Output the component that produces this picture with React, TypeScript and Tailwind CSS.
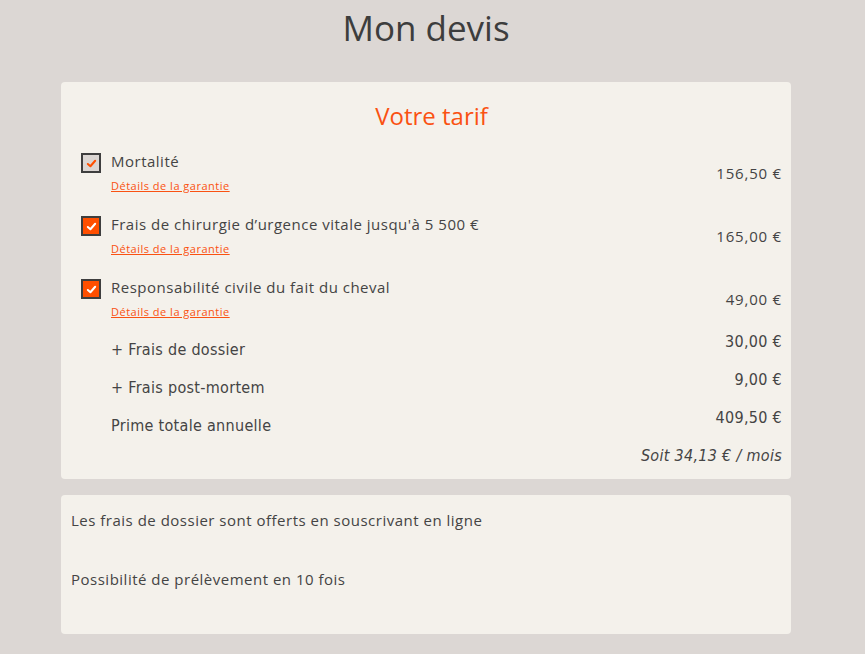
import React from "react"

interface Garantie {
  label: string
  price: string
  checked: boolean
  highlight: boolean
}

const garanties: Garantie[] = [
  { label: "Mortalité", price: "156,50 €", checked: true, highlight: false },
  {
    label: "Frais de chirurgie d’urgence vitale jusqu'à 5 500 €",
    price: "165,00 €",
    checked: true,
    highlight: true,
  },
  {
    label: "Responsabilité civile du fait du cheval",
    price: "49,00 €",
    checked: true,
    highlight: true,
  },
]

const frais = [
  { label: "+ Frais de dossier", price: "30,00 €" },
  { label: "+ Frais post-mortem", price: "9,00 €" },
  { label: "Prime totale annuelle", price: "409,50 €" },
]

function Checkbox({ highlight }: { highlight: boolean }) {
  return (
    <div
      className={
        highlight
          ? "mt-[2px] flex h-5 w-5 shrink-0 items-center justify-center border-2 border-[#3e3e3e] bg-[#ff4f00]"
          : "mt-[2px] flex h-5 w-5 shrink-0 items-center justify-center border-2 border-[#3e3e3e] bg-[#dbd6d3]"
      }
    >
      <svg viewBox="0 0 12 12" className="h-[11px] w-[11px]">
        <polyline
          points="2,6.5 4.8,9 10,3"
          fill="none"
          stroke={highlight ? "#ffffff" : "#ff4f00"}
          strokeWidth="2.2"
          strokeLinecap="round"
          strokeLinejoin="round"
        />
      </svg>
    </div>
  )
}

export default function App() {
  return (
    <div className="min-h-[654px] w-full bg-[#dcd7d4] font-['Open_Sans',sans-serif] text-[#444444]">
      <div className="flex w-[852px] flex-col items-center pb-5">
        <h1 className="mt-[5px] text-[35px] leading-[46px] text-[#3d3d3d]">Mon devis</h1>

        <div className="mt-[31px] w-[730px] rounded bg-[#f4f1eb] pt-[18px] pr-[9px] pb-[13px] pl-5">
          <h2 className="text-center text-[24px] leading-8 text-[#fa5212]">Votre tarif</h2>

          <div className="mt-[19px] flex flex-col gap-5">
            {garanties.map((g) => (
              <div key={g.label} className="flex items-center justify-between">
                <div className="flex gap-[10px]">
                  <Checkbox highlight={g.highlight} />
                  <div className="flex flex-col">
                    <span className="text-[15px] leading-5 tracking-[0.5px]">{g.label}</span>
                    <a
                      href="#"
                      className="mt-[7px] text-[11px] leading-4 tracking-[0.5px] text-[#fa5212] underline"
                    >
                      Détails de la garantie
                    </a>
                  </div>
                </div>
                <span className="text-[15px] leading-5 tracking-[0.8px]">{g.price}</span>
              </div>
            ))}
          </div>

          <div className="mt-3 flex flex-col font-['DejaVu_Sans_Condensed','Liberation_Sans_Narrow',sans-serif]">
            {frais.map((f) => (
              <div key={f.label} className="flex h-[38px] items-start justify-between pl-[30px]">
                <span className="mt-2 text-[16px] leading-5 tracking-[0.3px]">{f.label}</span>
                <span className="text-[16px] leading-5 tracking-[0.3px]">{f.price}</span>
              </div>
            ))}
            <div className="flex justify-end">
              <span className="text-[16px] italic leading-5 tracking-[0.3px]">Soit 34,13 € / mois</span>
            </div>
          </div>
        </div>

        <div className="mt-4 w-[730px] rounded bg-[#f4f1eb] pt-[15px] pb-[45px] pl-[10px] text-[15px] leading-5 tracking-[0.5px]">
          <p>Les frais de dossier sont offerts en souscrivant en ligne</p>
          <p className="mt-[39px]">Possibilité de prélèvement en 10 fois</p>
        </div>
      </div>
    </div>
  )
}
